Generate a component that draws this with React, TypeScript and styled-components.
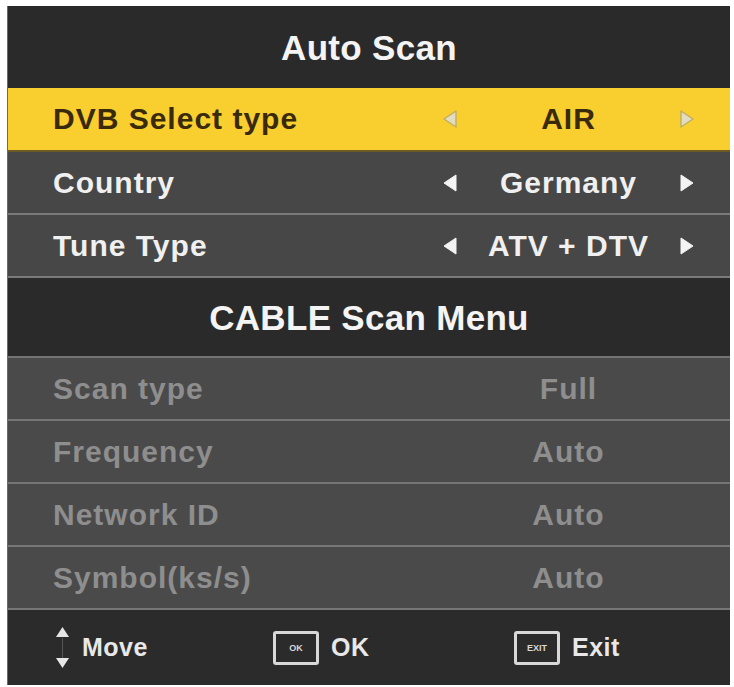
import React from "react";
import styled, { createGlobalStyle } from "styled-components";

type Item = { label: string; value: string; arrows?: boolean };

const mainItems: Item[] = [
  { label: "Country", value: "Germany", arrows: true },
  { label: "Tune Type", value: "ATV + DTV", arrows: true },
];

const cableItems: Item[] = [
  { label: "Scan type", value: "Full" },
  { label: "Frequency", value: "Auto" },
  { label: "Network ID", value: "Auto" },
  { label: "Symbol(ks/s)", value: "Auto" },
];

const Arrow: React.FC<{ dir: "left" | "right"; ghost?: boolean }> = ({ dir, ghost }) => (
  <svg width="16" height="20" viewBox="0 0 16 20">
    <polygon
      points={dir === "left" ? "14,2 2,10 14,18" : "2,2 14,10 2,18"}
      fill={ghost ? "#e2dcc2" : "#f4f4f4"}
      stroke={ghost ? "#bfae62" : "#f4f4f4"}
      strokeWidth={ghost ? 1.4 : 1}
      strokeLinejoin="round"
    />
  </svg>
);

const MoveIcon = () => (
  <svg width="15" height="44" viewBox="0 0 15 44">
    <polygon points="7.5,1 14,11 1,11" fill="#e6e6e6" />
    <line x1="7.5" y1="12" x2="7.5" y2="32" stroke="#555" strokeWidth="1" />
    <polygon points="1,32 14,32 7.5,42" fill="#e6e6e6" />
  </svg>
);

const App: React.FC = () => {
  return (
    <>
      <GlobalStyle />
      <Panel>
        <Title height={82}>Auto Scan</Title>

        <Row tone="active">
          <Label>DVB Select type</Label>
          <ArrowCell><Arrow dir="left" ghost /></ArrowCell>
          <Value>AIR</Value>
          <ArrowCell><Arrow dir="right" ghost /></ArrowCell>
        </Row>

        {mainItems.map((item) => (
          <Row key={item.label} tone="normal">
            <Label>{item.label}</Label>
            <ArrowCell><Arrow dir="left" /></ArrowCell>
            <Value>{item.value}</Value>
            <ArrowCell><Arrow dir="right" /></ArrowCell>
          </Row>
        ))}

        <Title height={80} divided>CABLE Scan Menu</Title>

        {cableItems.map((item) => (
          <Row key={item.label} tone="disabled">
            <Label>{item.label}</Label>
            <ArrowCell />
            <Value>{item.value}</Value>
            <ArrowCell />
          </Row>
        ))}

        <Footer>
          <Hint>
            <MoveIcon />
            <HintText>Move</HintText>
          </Hint>
          <Hint>
            <KeyBox>OK</KeyBox>
            <HintText>OK</HintText>
          </Hint>
          <Hint>
            <KeyBox>EXIT</KeyBox>
            <HintText>Exit</HintText>
          </Hint>
        </Footer>
      </Panel>
    </>
  );
};

export default App;

const GlobalStyle = createGlobalStyle`
  body {
    margin: 0;
    background: #ffffff;
    font-family: "Liberation Sans", Arial, sans-serif;
  }
`;

const Panel = styled.div`
  display: flex;
  flex-direction: column;
  width: 723px;
  margin: 6px 0 0 7px;
  background: #2b2b2b;
  border-left: 1px solid #6a6a6a;
  box-sizing: border-box;
`;

const Title = styled.div<{ height: number; divided?: boolean }>`
  display: flex;
  align-items: center;
  justify-content: center;
  height: ${(p) => p.height}px;
  box-sizing: border-box;
  background: #2a2a2a;
  color: #f4f4f4;
  font-size: 35px;
  font-weight: bold;
  letter-spacing: 0.3px;
  padding-top: 2px;
  border-bottom: ${(p) => (p.divided ? "2px solid #737373" : "none")};
`;

const toneStyles = {
  active: { bg: "#f8cf2f", fg: "#3a2a0c", line: "#6b5a22", height: 64 },
  normal: { bg: "#474747", fg: "#f0f0f0", line: "#7a7a7a", height: 63 },
  disabled: { bg: "#4a4a4a", fg: "#8e8e8e", line: "#767676", height: 63 },
};

const Row = styled.div<{ tone: keyof typeof toneStyles }>`
  display: grid;
  grid-template-columns: 1fr 24px 213px 24px;
  align-items: center;
  height: ${(p) => toneStyles[p.tone].height}px;
  box-sizing: border-box;
  padding: 0 31px 0 45px;
  background: ${(p) => toneStyles[p.tone].bg};
  color: ${(p) => toneStyles[p.tone].fg};
  border-bottom: 2px solid ${(p) => toneStyles[p.tone].line};
  font-size: 30px;
  font-weight: bold;
  letter-spacing: 1px;
`;

const Label = styled.span`
  white-space: nowrap;
`;

const Value = styled.span`
  text-align: center;
  white-space: nowrap;
`;

const ArrowCell = styled.span`
  display: flex;
  align-items: center;
  justify-content: center;
`;

const Footer = styled.div`
  display: grid;
  grid-template-columns: 218px 241px 1fr;
  align-items: center;
  height: 75px;
  padding-left: 47px;
  background: #2b2b2b;
  color: #e8e8e8;
`;

const Hint = styled.div`
  display: flex;
  align-items: center;
  gap: 12px;
`;

const HintText = styled.span`
  font-size: 25px;
  font-weight: bold;
  letter-spacing: 0.5px;
`;

const KeyBox = styled.span`
  display: flex;
  align-items: center;
  justify-content: center;
  width: 46px;
  height: 34px;
  box-sizing: border-box;
  border: 3px solid #d8d8d8;
  border-radius: 3px;
  font-size: 9px;
  font-weight: bold;
  color: #d8d8d8;
`;
